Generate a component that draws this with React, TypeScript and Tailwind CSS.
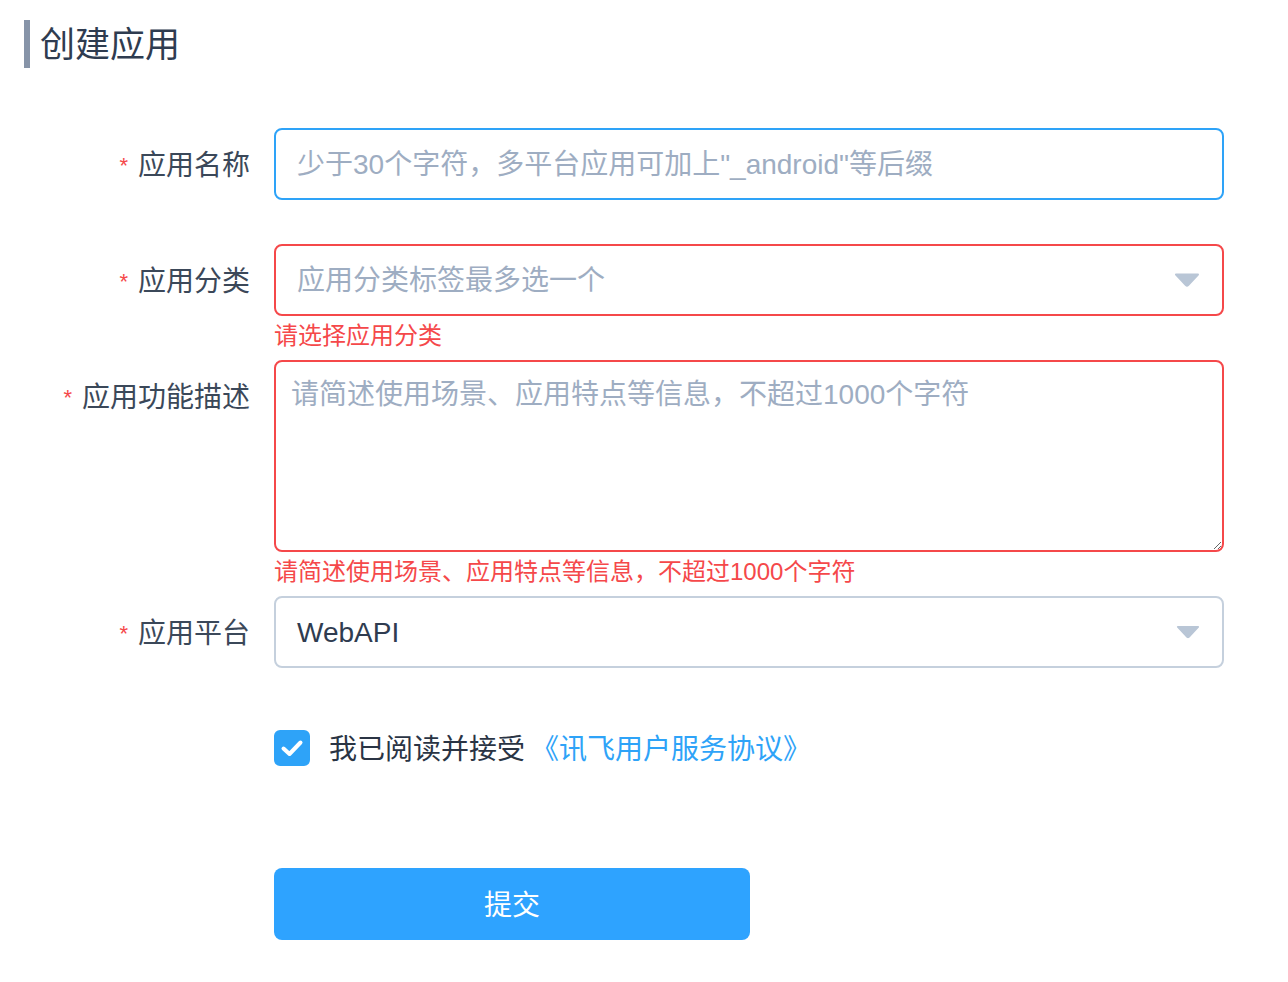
import React, { useState } from "react";

const font = "font-['Liberation_Sans','Noto_Sans_CJK_SC',sans-serif]";

const Caret = ({ small }: { small?: boolean }) => (
  <svg
    width={small ? 24 : 26}
    height={small ? 13 : 14}
    viewBox="0 0 26 14"
    className="absolute right-[22px] top-1/2 -translate-y-1/2"
  >
    <path
      d="M2 1.5 L24 1.5 L14.2 12 Q13 13.2 11.8 12 Z"
      fill="#b9c6d6"
      stroke="#b9c6d6"
      strokeWidth="2"
      strokeLinejoin="round"
    />
  </svg>
);

const Label: React.FC<{ text: string }> = ({ text }) => (
  <div className="w-[250px] shrink-0 translate-y-[2px] text-right leading-[72px] text-[28px] text-[#3b4859]">
    <span className="mr-[10px] align-[2px] text-[22px] text-[#f5484a]">*</span>
    {text}
  </div>
);

export default function App() {
  const [agreed, setAgreed] = useState(true);

  return (
    <div className={`${font} min-h-[982px] w-[1288px] bg-white`}>
      <div className="flex items-center pl-[24px] pt-[20px]">
        <div className="h-[48px] w-[6px] bg-[#8794a8]" />
        <h1 className="ml-[10px] translate-y-[1px] text-[35px] leading-[48px] text-[#2f3c50]">创建应用</h1>
      </div>

      <form className="mt-[60px] flex flex-col" onSubmit={(e) => e.preventDefault()}>
        <div className="mb-[44px] flex gap-[24px]">
          <Label text="应用名称" />
          <input
            className="h-[72px] w-[950px] rounded-[8px] border-2 border-[#2ea3f8] px-[21px] pt-[2px] text-[28px] text-[#2f3c50] outline-none placeholder:text-[#9eadc2]"
            placeholder={'少于30个字符，多平台应用可加上"_android"等后缀'}
          />
        </div>

        <div className="flex gap-[24px]">
          <Label text="应用分类" />
          <div className="w-[950px]">
            <div className="relative flex h-[72px] items-center rounded-[8px] border-2 border-[#f5484a] px-[21px] pt-[2px] text-[28px] text-[#9eadc2]">
              应用分类标签最多选一个
              <Caret />
            </div>
            <div className="h-[44px] leading-[40px] text-[24px] text-[#f5484a]">请选择应用分类</div>
          </div>
        </div>

        <div className="flex gap-[24px]">
          <Label text="应用功能描述" />
          <div className="w-[950px]">
            <textarea
              className="block h-[192px] w-full rounded-[8px] border-2 border-[#f5484a] px-[15px] pb-[12px] pt-[13px] text-[28px] leading-[40px] text-[#2f3c50] outline-none placeholder:text-[#9eadc2]"
              placeholder="请简述使用场景、应用特点等信息，不超过1000个字符"
            />
            <div className="h-[44px] leading-[40px] text-[24px] text-[#f5484a]">
              请简述使用场景、应用特点等信息，不超过1000个字符
            </div>
          </div>
        </div>

        <div className="flex gap-[24px]">
          <Label text="应用平台" />
          <div className="relative flex h-[72px] w-[950px] items-center rounded-[8px] border-2 border-[#c5d0dd] px-[21px] pt-[2px] text-[28px] text-[#2f3c50]">
            WebAPI
            <Caret small />
          </div>
        </div>

        <div className="ml-[274px] mt-[62px] flex items-center">
          <button
            type="button"
            onClick={() => setAgreed(!agreed)}
            className={`flex h-[36px] w-[36px] items-center justify-center rounded-[6px] border-2 ${
              agreed ? "border-[#2ea3f8] bg-[#2ea3f8]" : "border-[#c5d0dd] bg-white"
            }`}
          >
            {agreed && (
              <svg width="26" height="26" viewBox="0 0 26 26">
                <path d="M4.5 13.5 L10.5 19 L21.5 7.5" fill="none" stroke="white" strokeWidth="4" strokeLinecap="round" strokeLinejoin="round" />
              </svg>
            )}
          </button>
          <span className="ml-[19px] translate-y-[2px] text-[28px] leading-[36px] text-[#2a3444]">我已阅读并接受</span>
          <a className="ml-[6px] translate-y-[2px] text-[28px] leading-[36px] text-[#2ea3f8]" href="#">
            《讯飞用户服务协议》
          </a>
        </div>

        <div className="ml-[274px] mt-[102px]">
          <button
            type="submit"
            className="h-[72px] w-[476px] rounded-[8px] bg-[#2ea3ff] pt-[4px] text-[28px] text-white"
          >
            提交
          </button>
        </div>
      </form>
    </div>
  );
}
